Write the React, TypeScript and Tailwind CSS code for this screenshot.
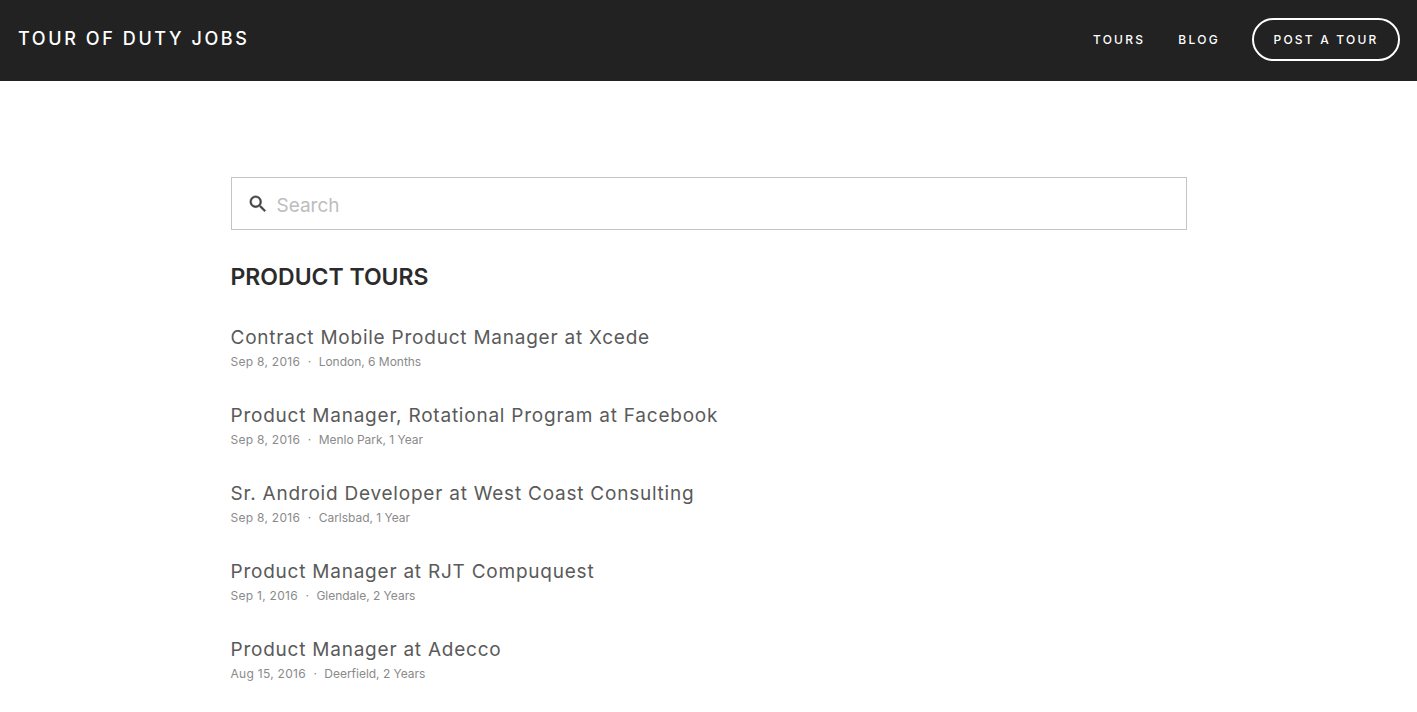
const jobs = [
  ["Contract Mobile Product Manager at Xcede", "Sep 8, 2016", "London, 6 Months"],
  ["Product Manager, Rotational Program at Facebook", "Sep 8, 2016", "Menlo Park, 1 Year"],
  ["Sr. Android Developer at West Coast Consulting", "Sep 8, 2016", "Carlsbad, 1 Year"],
  ["Product Manager at RJT Compuquest", "Sep 1, 2016", "Glendale, 2 Years"],
  ["Product Manager at Adecco", "Aug 15, 2016", "Deerfield, 2 Years"],
];

export default function App() {
  return (
    <div className="h-[712px] overflow-hidden bg-white font-['Inter',sans-serif]">
      <header className="flex h-[81px] items-center justify-between bg-[#222222] pl-[18px] pr-[17px] text-white">
        <a className="pb-[3px] text-[18px] font-medium leading-none tracking-[2.6px]">TOUR OF DUTY JOBS</a>
        <nav className="flex items-center">
          <a className="mr-[33px] pb-[2px] text-[12px] font-medium leading-none tracking-[2.25px]">TOURS</a>
          <a className="mr-[32px] pb-[2px] text-[12px] font-medium leading-none tracking-[2.3px]">BLOG</a>
          <a className="mb-[2px] flex h-[43px] w-[148px] items-center justify-center rounded-full border-2 border-white text-[12px] font-medium leading-none tracking-[2.2px]">POST A TOUR</a>
        </nav>
      </header>
      <main className="mx-auto w-[956px] pt-[96px]">
        <div className="flex h-[53px] items-center border border-[#c4c4c4] pl-[15px]">
          <svg viewBox="0 0 24 24" className="h-[22px] w-[22px] fill-[#444444] stroke-[#444444] stroke-[0.4]" aria-hidden="true">
            <path d="M15.5 14h-.79l-.28-.27A6.471 6.471 0 0 0 16 9.5 6.5 6.5 0 1 0 9.5 16c1.61 0 3.09-.59 4.23-1.57l.27.28v.79l5 4.99L20.49 19l-4.99-5zm-6 0C7.01 14 5 11.99 5 9.5S7.01 5 9.5 5 14 7.01 14 9.5 11.99 14 9.5 14z" />
          </svg>
          <span className="ml-[8px] pt-[4px] text-[19px] leading-none text-[#bdbdbd]">Search</span>
        </div>
        <h2 className="mt-[33px] text-[23px] font-semibold leading-[29px] text-[#2b2b2b]">PRODUCT TOURS</h2>
        <ul className="mt-[33px] flex flex-col gap-[30px]">
          {jobs.map(([title, date, place]) => (
            <li key={title} className="h-[48px]">
              <div className="text-[19px] leading-[26px] tracking-[0.77px] text-[#5a5a5a]">{title}</div>
              <div className="mt-[2px] flex text-[12px] leading-[18px] text-[#8a8a8a]">
                <span className="tracking-[0.28px]">{date}</span>
                <span className="mx-[7.5px]">·</span>
                <span className="tracking-[-0.02px]">{place}</span>
              </div>
            </li>
          ))}
        </ul>
      </main>
    </div>
  );
}
